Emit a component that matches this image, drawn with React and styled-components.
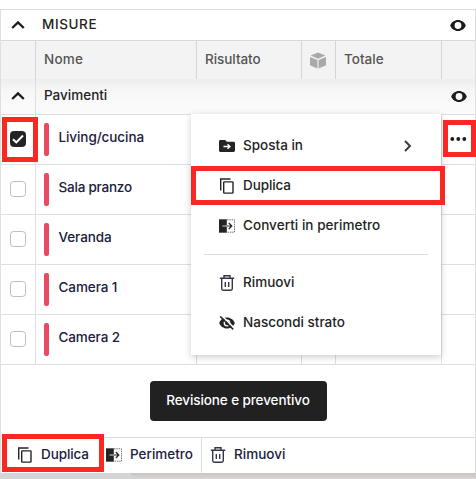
import React, { useState } from "react";
import styled, { createGlobalStyle } from "styled-components";

const GlobalStyle = createGlobalStyle`
  * { box-sizing: border-box; }
  body {
    margin: 0;
    background: #fff;
    font-family: Inter, "Liberation Sans", sans-serif;
    font-size: 14px;
    font-weight: 500;
    color: #242424;
    overflow: hidden;
  }
  svg { display: block; flex: none; }
`
const Page = styled.div`
  display: flex;
  flex-direction: column;
  height: 479px;
  padding-top: 9px;
`
const Panel = styled.div`
  position: relative;
  display: flex;
  flex-direction: column;
  height: 464px;
  border: 1px solid #dfdfdf;
  border-bottom: 0;
`
const Label = styled.span`
  padding-bottom: 2px;
  font-size: 13.5px;
  letter-spacing: ${(p) => p.$track || 0}px;
  line-height: 18px;
  white-space: nowrap;
`
const TitleBar = styled.div`
  display: flex;
  align-items: center;
  height: 31px;
  padding: 0 9px 0 10px;
  border-bottom: 1px solid #d8d8d8;
`
const Title = styled.div`
  display: flex;
  flex: 1;
  padding-left: 17px;
`
const Columns = styled.div`
  display: grid;
  grid-template-columns: 35px 161px 105px 34px 106px 1fr;
`
const HeadRow = styled(Columns)`
  height: 38px;
  background: #f3f3f3;
  color: #555;
`
const HeadCell = styled.div`
  display: flex;
  align-items: center;
  padding-left: 8px;
  border-right: 1px solid #d6d6d6;
  &:last-child { border-right: 0; }
`
const GroupRow = styled.div`
  display: flex;
  align-items: center;
  height: 36px;
  padding-right: 8px;
  background: linear-gradient(#ededed, #f6f6f6 30%, #fafafa 75%);
  border-bottom: 1px solid #dedede;
`
const GroupToggle = styled.div`
  display: flex;
  align-items: center;
  width: 35px;
  height: 100%;
  padding: 0 0 2px 10px;
  border-right: 1px solid #dedede;
`
const GroupName = styled.div`
  display: flex;
  flex: 1;
  padding: 0 0 1px 8px;
`
const Row = styled(Columns)`
  height: 50px;
  border-bottom: 1px solid #dbe0e0;
  color: #20203c;
`
const Cell = styled.div`
  position: relative;
  display: flex;
  align-items: center;
  border-right: 1px solid #dbe0e0;
  &:last-child { border-right: 0; }
`
const CheckCell = styled(Cell)`
  padding-left: 9px;
`
const NameCell = styled(Cell)`
  padding: 0 0 3px 8px;
  gap: 9.5px;
`
const DotsCell = styled(Cell)`
  padding: 0 0 1px 8px;
`
const Strip = styled.div`
  width: 5px;
  height: 33px;
  margin-top: 3px;
  border-radius: 2px;
  background: #ea4a61;
`
const Box = styled.button`
  display: flex;
  align-items: center;
  justify-content: center;
  width: 16px;
  height: 16px;
  margin-top: -2px;
  padding: 0;
  border: 1px solid ${(p) => (p.$on ? "#242424" : "#bdbdbd")};
  border-radius: 3.5px;
  background: ${(p) => (p.$on ? "#242424" : "#fff")};
`
// red frame laid over the part to point at
const Highlight = styled.div`
  position: absolute;
  z-index: 3;
  left: ${(p) => p.$x}px;
  top: ${(p) => p.$y}px;
  width: ${(p) => p.$w}px;
  height: ${(p) => p.$h}px;
  border: 5px solid #f92822;
  pointer-events: none;
`
const Menu = styled.div`
  position: absolute;
  z-index: 2;
  left: 190px;
  top: 104px;
  width: 250px;
  height: 241px;
  padding: 12px 13px;
  background: #fff;
  box-shadow: 0 2px 7px rgba(0, 0, 0, 0.2);
`
const MenuItem = styled.div`
  display: flex;
  align-items: center;
  height: 40px;
  padding: 0 16px 0 15px;
  gap: 8px;
  > :nth-child(2) { flex: 1; }
`
const Divider = styled.div`
  height: 1px;
  margin: 8px 0;
  background: #dcdcdc;
`
const Action = styled.div`
  display: flex;
  flex: 1;
  align-items: center;
  justify-content: center;
`
const ReviewButton = styled.button`
  display: flex;
  align-items: center;
  justify-content: center;
  width: 177px;
  height: 40px;
  padding: 0;
  border: 0;
  border-radius: 4px;
  background: #212121;
  color: #fff;
  font: inherit;
`
const Toolbar = styled.div`
  position: relative;
  display: flex;
  height: 36px;
  border-top: 1px solid #dcdcdc;
  color: #20203c;
`
const Tool = styled.div`
  display: flex;
  align-items: center;
  width: ${(p) => p.$w}px;
  padding: 0 0 1px ${(p) => p.$pad}px;
  gap: 8px;
  border-right: ${(p) => (p.$line ? "1px solid #dcdcdc" : "0")};
`
const Ground = styled.div`
  flex: 1;
  background: linear-gradient(90deg, #d5d4d7 131px, transparent 131px),
    linear-gradient(#c8c5c4, #dad6d5);
`

const Chevron = () => (
  <svg width="14" height="10" viewBox="0 0 14 10" fill="none" stroke="#1c1c1c" strokeWidth="2.3">
    <path d="M1.2 8 7 2.4 12.8 8" />
  </svg>
)
const Eye = () => (
  <svg width="16" height="11" viewBox="0 0 16 11">
    <path fill="#1c1c1c" fillRule="evenodd" d="M8 0C4.4 0 1.4 2.3.2 5.5 1.4 8.7 4.4 11 8 11s6.6-2.3 7.8-5.5C14.6 2.3 11.6 0 8 0Zm0 2.1a3.4 3.4 0 1 1 0 6.800 3.400 3.400 0 0 1 0-6.800Z" />
  </svg>
)
const Cube = () => (
  <svg width="16" height="17" viewBox="0.8 0.5 16.4 16.600" fill="#a9a9a9">
    <path d="M9 .6 16.600 3.800 9 7 1.400 3.800ZM.8 5.100 8.400 8.300V17L.8 13.700ZM17.200 5.100 9.600 8.300V17l7.600-3.300Z" />
  </svg>
)
const Tick = () => (
  <svg width="12" height="10" viewBox="0 0 12 10" fill="none" stroke="#fff" strokeWidth="2">
    <path d="M1 5.200 4.300 8.400 11 1.500" />
  </svg>
)
const Dots = () => (
  <svg width="17" height="4" viewBox="0 0 17 4" fill="#1c1c1c">
    <circle cx="2.3" cy="2" r="1.9" />
    <circle cx="8.3" cy="2" r="1.9" />
    <circle cx="14.3" cy="2" r="1.9" />
  </svg>
)
const FolderMove = () => (
  <svg width="16" height="16" viewBox="0 0 16 16">
    <path fill="#242424" d="M1.400 2h4.800l1.600 1.700h6.800c.8 0 1.400.6 1.400 1.400v7.500c0 .8-.6 1.400-1.400 1.400H1.400C.6 14 0 13.400 0 12.600V3.400C0 2.600.6 2 1.400 2Z" />
    <path stroke="#fff" strokeWidth="1.4" fill="none" d="M4.500 8.500h6M8.500 6.200l2.500 2.300-2.500 2.300" />
  </svg>
)
const Copy = () => (
  <svg width="16" height="16" viewBox="0 0 16 16" fill="none" stroke="#242424" strokeWidth="1.4">
    <path d="M1.700 12.500V1h9.800" />
    <rect x="4.700" y="3.900" width="9.300" height="11.200" rx=".7" />
  </svg>
)
const Convert = () => (
  <svg width="16" height="16" viewBox="0 0 16 16" fill="none">
    <path fill="#242424" d="M0 1.300h7.800v13.400H0Z" />
    <path stroke="#666" strokeDasharray="1.500 .8" strokeWidth=".9" d="M8 1.800h7.500v12.400H8" />
    <path stroke="#bbb" strokeWidth="1.2" d="M3.500 8H8" />
    <path stroke="#242424" strokeWidth="1.2" d="M8 8h4.500M9.800 5l3 3-3 3" />
  </svg>
)
const Trash = () => (
  <svg width="16" height="16" viewBox="0 0 16 16" fill="none" stroke="#35354a" strokeWidth="1.4">
    <path d="M.8 3.300h14.400M5 3V.8h6V3M2.700 3.500v10c0 1 .6 1.700 1.600 1.700h7.400c1 0 1.600-.7 1.600-1.700v-10M6.300 7v4.900M9.700 7v4.900" />
  </svg>
)
const EyeOff = () => (
  <svg width="16" height="14" viewBox="0 0 16 14">
    <path fill="#242424" fillRule="evenodd" d="M8 1.500C4.400 1.500 1.400 3.800.2 7c1.200 3.200 4.200 5.500 7.800 5.500s6.600-2.300 7.800-5.500C14.600 3.800 11.600 1.500 8 1.500Zm0 2.100a3.400 3.400 0 1 1 0 6.800 3.400 3.400 0 0 1 0-6.800Z" />
    <circle cx="8.300" cy="7" r="2.300" fill="#242424" />
    <path stroke="#fff" strokeWidth="1.500" d="M2.800-.4 15.800 12.600" />
    <path stroke="#242424" strokeWidth="1.500" d="M1.200.4 14.200 13.400" />
  </svg>
)
const ArrowRight = () => (
  <svg width="8" height="12" viewBox="0 0 8 12" fill="none" stroke="#35354a" strokeWidth="1.9">
    <path d="M1 1l5 5-5 5" />
  </svg>
)

const rooms = [
  { name: "Living/cucina", track: -0.08 },
  { name: "Sala pranzo", track: -0.22 },
  { name: "Veranda", track: -0.1 },
  { name: "Camera 1", track: -0.08 },
  { name: "Camera 2", track: -0.1 },
]

export default function App() {
  const [checked, setChecked] = useState(["Living/cucina"])

  const toggle = (name) => {
    setChecked(checked.includes(name) ? checked.filter((n) => n !== name) : [...checked, name])
  }

  const roomRows = rooms.map((room, index) => {
    const on = checked.includes(room.name)
    return <Row key={room.name}>
      <CheckCell>
        <Box $on={on} onClick={() => toggle(room.name)}>{on && <Tick />}</Box>
        {index === 0 && <Highlight $x={0.6} $y={2} $w={36} $h={45} />}
      </CheckCell>
      <NameCell>
        <Strip />
        <Label $track={room.track}>{room.name}</Label>
      </NameCell>
      <Cell />
      <Cell />
      <Cell />
      <DotsCell>
        {index === 0 && <Dots />}
        {index === 0 && <Highlight $x={0.7} $y={5} $w={33} $h={37} />}
      </DotsCell>
    </Row>
  })

  return (
    <Page>
      <GlobalStyle />
      <Panel>
        <TitleBar>
          <Chevron />
          <Title><Label $track={0.6}>MISURE</Label></Title>
          <Eye />
        </TitleBar>
        <HeadRow>
          <HeadCell />
          <HeadCell><Label $track={0.2}>Nome</Label></HeadCell>
          <HeadCell><Label $track={-0.05}>Risultato</Label></HeadCell>
          <HeadCell><Cube /></HeadCell>
          <HeadCell><Label>Totale</Label></HeadCell>
          <HeadCell />
        </HeadRow>
        <GroupRow>
          <GroupToggle><Chevron /></GroupToggle>
          <GroupName><Label>Pavimenti</Label></GroupName>
          <Eye />
        </GroupRow>
        {roomRows}
        <Action>
          <ReviewButton><Label $track={-0.1}>Revisione e preventivo</Label></ReviewButton>
        </Action>
        <Toolbar>
          <Tool $w={104} $pad={16}><Copy /><Label $track={-0.1}>Duplica</Label></Tool>
          <Tool $w={97} $pad={1} $line><Convert /><Label>Perimetro</Label></Tool>
          <Tool $w={120} $pad={8}><Trash /><Label>Rimuovi</Label></Tool>
          <Highlight $x={0.6} $y={-4.5} $w={102} $h={38.5} />
        </Toolbar>
        <Menu>
          <MenuItem><FolderMove /><Label>Sposta in</Label><ArrowRight /></MenuItem>
          <MenuItem><Copy /><Label $track={-0.1}>Duplica</Label></MenuItem>
          <MenuItem><Convert /><Label $track={0.05}>Converti in perimetro</Label></MenuItem>
          <Divider />
          <MenuItem><Trash /><Label>Rimuovi</Label></MenuItem>
          <MenuItem><EyeOff /><Label>Nascondi strato</Label></MenuItem>
          <Highlight $x={-0.3} $y={52} $w={254.6} $h={38.7} />
        </Menu>
      </Panel>
      <Ground />
    </Page>
  )
}
